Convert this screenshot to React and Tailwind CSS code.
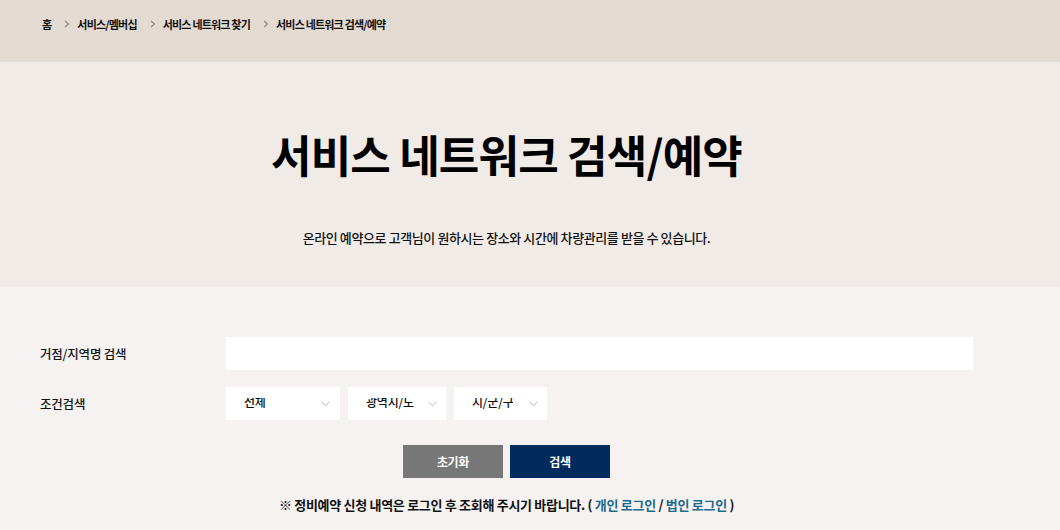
import React from "react";

const font = { fontFamily: '"Noto Sans CJK KR", "Noto Sans", sans-serif' };

function Crumb() {
  return (
    <svg width="6" height="8" viewBox="0 0 6 8" className="shrink-0">
      <path d="M1 1 L4.5 4 L1 7" fill="none" stroke="#8a8580" strokeWidth="1.1" />
    </svg>
  );
}

function Chevron() {
  return (
    <svg width="9" height="6" viewBox="0 0 9 6" className="shrink-0">
      <path d="M0.5 0.8 L4.5 4.8 L8.5 0.8" fill="none" stroke="#b9b9b9" strokeWidth="1" />
    </svg>
  );
}

function Select({ label, width, chevronRight }) {
  return (
    <div
      className="h-[33px] bg-white flex items-center justify-between pl-[18px]"
      style={{ width, paddingRight: chevronRight }}
    >
      <div className="h-[11px] overflow-hidden flex items-end">
        <span className="text-[12px] leading-[14px] font-medium text-[#111] tracking-[-0.2px] whitespace-nowrap">
          {label}
        </span>
      </div>
      <Chevron />
    </div>
  );
}

export default function App() {
  return (
    <div style={font} className="w-[1060px] min-h-[530px] bg-[#f6f2f1] text-[#111]">
      {/* breadcrumb */}
      <div className="h-[62px] bg-[#e3dad1]">
        <div className="w-[1013px] pl-[42px] pt-[17px] flex items-center text-[11px] leading-[14px] font-bold tracking-[-0.8px] text-[#111]">
          <span>홈</span>
          <span className="ml-[13px] mr-[7px] flex"><Crumb /></span>
          <span>서비스/멤버십</span>
          <span className="ml-[13px] mr-[7px] flex"><Crumb /></span>
          <span>서비스 네트워크 찾기</span>
          <span className="ml-[13px] mr-[7px] flex"><Crumb /></span>
          <span>서비스 네트워크 검색/예약</span>
        </div>
      </div>

      {/* hero */}
      <div className="h-[225px] bg-[#f1ebe8]">
        <div className="w-[1013px] flex flex-col items-center pt-[65px]">
          <h1 className="text-[44px] leading-[54px] font-bold tracking-[-0.8px] text-black">
            서비스 네트워크 검색/예약
          </h1>
          <p className="mt-[48px] text-[13px] leading-[18px] font-medium tracking-[-0.4px] text-[#111]">
            온라인 예약으로 고객님이 원하시는 장소와 시간에 차량관리를 받을 수 있습니다.
          </p>
        </div>
      </div>

      {/* form */}
      <div className="w-[1013px] px-[40px] pt-[50px] pb-[20px]">
        <div className="flex items-center">
          <div className="w-[186px] text-[12.5px] leading-[18px] font-medium tracking-[-0.2px]">거점/지역명 검색</div>
          <div className="flex-1 h-[33px] bg-white" />
        </div>
        <div className="flex items-center mt-[17px]">
          <div className="w-[186px] text-[12.5px] leading-[18px] font-medium tracking-[-0.2px]">조건검색</div>
          <div className="flex gap-[8px]">
            <Select label="전체" width={114} chevronRight={10} />
            <Select label="광역시/도" width={98} chevronRight={9} />
            <Select label="시/군/구" width={93} chevronRight={9} />
          </div>
        </div>
        <div className="flex justify-center gap-[7px] mt-[25px]">
          <button className="w-[100px] h-[33px] bg-[#777777] text-white text-[12px] font-bold tracking-[-0.3px]">초기화</button>
          <button className="w-[100px] h-[33px] bg-[#002b5c] text-white text-[12px] font-bold tracking-[-0.3px]">검색</button>
        </div>
        <p className="mt-[18px] text-center text-[13px] leading-[18px] font-bold tracking-[-0.3px] text-[#111]">
          ※ 정비예약 신청 내역은 로그인 후 조회해 주시기 바랍니다. ({" "}
          <span className="text-[#1b6a8f]">개인 로그인</span> /{" "}
          <span className="text-[#1b6a8f]">법인 로그인</span> )
        </p>
      </div>
    </div>
  );
}
